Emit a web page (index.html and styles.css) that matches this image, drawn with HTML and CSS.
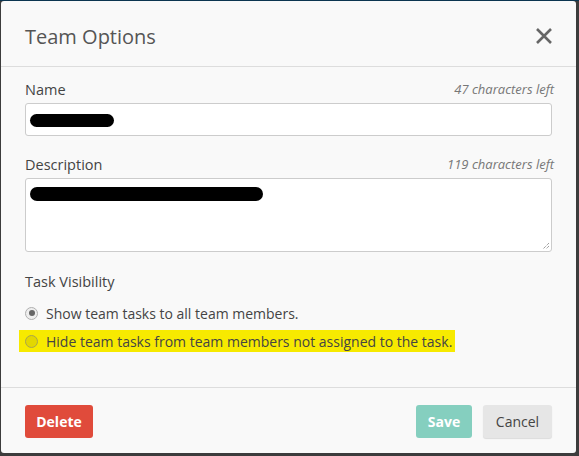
FILE: index.html
```html
<!DOCTYPE html>
<html>
<head>
<meta charset="utf-8">
<link rel="stylesheet" href="styles.css">
</head>
<body>
<div class="modal">
  <div class="header">
    <h1 class="title">Team Options</h1>
    <svg class="close" width="20" height="20" viewBox="0 0 20 20"><path d="M3 3 L17 17 M17 3 L3 17" stroke="#666" stroke-width="2.6" fill="none"/></svg>
  </div>
  <div class="body">
    <div class="label-row"><span class="label">Name</span><span class="count">47 characters left</span></div>
    <div class="input"><span class="redact redact-name"></span></div>
    <div class="label-row gap"><span class="label">Description</span><span class="count">119 characters left</span></div>
    <div class="textarea"><span class="redact redact-desc"></span>
      <svg class="grip" width="8" height="8" viewBox="0 0 8 8"><path d="M7 1 L1 7 M7 4 L4 7" stroke="#777" stroke-width="1" stroke-dasharray="1 1" fill="none"/></svg>
    </div>
    <div class="section-label">Task Visibility</div>
    <div class="radio-row first"><span class="radio checked"></span><span class="radio-text">Show team tasks to all team members.</span></div>
    <div class="radio-row highlight"><span class="radio"></span><span class="radio-text">Hide team tasks from team members not assigned to the task.</span></div>
  </div>
  <div class="footer">
    <button class="btn btn-delete">Delete</button>
    <div class="right">
      <button class="btn btn-save">Save</button>
      <button class="btn btn-cancel">Cancel</button>
    </div>
  </div>
</div>
</body>
</html>
```
FILE: styles.css
```css
html, body {
  margin: 0;
  padding: 0;
}
body {
  width: 579px;
  height: 456px;
  background: #3c3c3c;
  border-top: 1px solid #0b3550;
  box-sizing: border-box;
  padding: 0 3px 3px 1px;
  font-family: "Open Sans", "Liberation Sans", sans-serif;
  overflow: hidden;
}
.modal {
  background: #f9f9f9;
  height: 452px;
  border-radius: 3px;
  display: flex;
  flex-direction: column;
}
.header {
  height: 65px;
  border-bottom: 1px solid #dddddd;
  display: flex;
  align-items: center;
  justify-content: space-between;
  padding: 0 24px 0 24px;
  flex-shrink: 0;
}
.title {
  margin: 0;
  font-size: 20px;
  font-weight: 400;
  color: #555555;
  position: relative;
  top: 3px;
}
.close {
  margin-right: -2px;
  position: relative;
  top: 2px;
}
.body {
  height: 321px;
  box-sizing: border-box;
  padding: 12px 24px 0 24px;
  border-bottom: 1px solid #dddddd;
  flex-shrink: 0;
}
.label-row {
  display: flex;
  justify-content: space-between;
  align-items: center;
  height: 20px;
  margin-bottom: 4px;
}
.label-row.gap {
  margin-top: 18px;
}
.label {
  font-size: 14.5px;
  color: #444444;
}
.count {
  font-size: 13px;
  font-style: italic;
  color: #777777;
  margin-right: -2px;
}
.input {
  height: 33px;
  box-sizing: border-box;
  background: #ffffff;
  border: 1px solid #cccccc;
  border-radius: 3px;
  display: flex;
  align-items: center;
  padding-left: 4px;
}
.redact {
  display: block;
  background: #000000;
  border-radius: 7px;
}
.redact-name {
  width: 84px;
  height: 13px;
  margin-top: 1px;
}
.textarea {
  height: 74px;
  box-sizing: border-box;
  background: #ffffff;
  border: 1px solid #cccccc;
  border-radius: 3px;
  padding: 8px 0 0 4px;
  position: relative;
}
.redact-desc {
  width: 233px;
  height: 14px;
}
.grip {
  position: absolute;
  right: 1px;
  bottom: 1px;
}
.section-label {
  margin-top: 20px;
  height: 20px;
  line-height: 20px;
  font-size: 14.5px;
  color: #444444;
}
.radio-row {
  display: flex;
  align-items: center;
  height: 22px;
}
.radio-row.first {
  margin-top: 10px;
  margin-bottom: 6px;
}
.radio-row.highlight {
  background: #f7ea00;
  margin-left: -6px;
  padding-left: 6px;
  width: 430px;
}
.radio {
  width: 11px;
  height: 11px;
  border: 1px solid #b0b0b0;
  border-radius: 50%;
  background: #eeeeee;
  margin-right: 8px;
  position: relative;
  flex-shrink: 0;
}
.radio.checked::after {
  content: "";
  position: absolute;
  left: 2.5px;
  top: 2.5px;
  width: 6px;
  height: 6px;
  border-radius: 50%;
  background: #666666;
}
.highlight .radio {
  background: rgba(0, 0, 0, 0.08);
  border-color: #a8a450;
}
.radio-text {
  font-size: 14px;
  color: #444444;
}
.footer {
  flex: 1;
  display: flex;
  justify-content: space-between;
  align-items: flex-start;
  padding: 17px 24px 0 24px;
}
.right {
  display: flex;
  gap: 11px;
}
.btn {
  height: 33px;
  border: none;
  border-radius: 3px;
  font-family: "Open Sans", "Liberation Sans", sans-serif;
  font-size: 14px;
  padding: 0 8px;
  cursor: pointer;
}
.btn-delete {
  background: #e04b3b;
  color: #ffffff;
  font-weight: 700;
  width: 68px;
}
.btn-save {
  background: #85cfbf;
  color: #ffffff;
  font-weight: 700;
  width: 56px;
}
.btn-cancel {
  background: #e6e6e6;
  color: #444444;
  width: 69px;
  box-shadow: 0 1px 1px rgba(0,0,0,0.12);
}
```
